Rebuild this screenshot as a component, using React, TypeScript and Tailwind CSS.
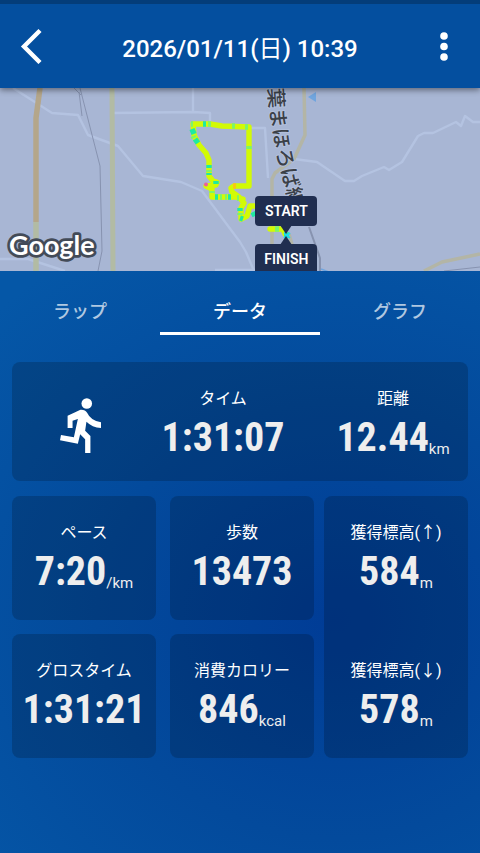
import React from 'react';

interface StatProps {
    label: string;
    value: string;
    unit?: string;
}

const tabs = ['ラップ', 'データ', 'グラフ'];

// Place name that runs down along the railway
const placeName = [
    { char: '葉', x: 276, y: 98, angle: 86 },
    { char: 'ま', x: 278, y: 118, angle: 84 },
    { char: 'ほ', x: 281, y: 138, angle: 82 },
    { char: 'ろ', x: 285, y: 158, angle: 79 },
    { char: 'ば', x: 290, y: 178, angle: 77 },
    { char: '線', x: 295, y: 197, angle: 75 },
];

const localRoads = [
    'M13 88L52 113L78 115L88 135L118 146L143 176L181 182L202 191L240 242L246 252L254 271',
    'M113 113L193 112L210 113V122',
    'M193 88V112',
    'M0 259H28L65 271',
    'M250 128H265L268 178',
    'M294 159L317 162L345 181H354L362 176L384 167L389 170L402 162L418 136L424 133H433L456 122L461 126L465 116L473 122H480',
    'M215 270H256',
];

const trackPath =
    'M285 234L283 229H270M254 206H250L247 216L241 219V208L244 203L239 197L232 192L231 188L234 186H249V127L222 126L210 124H193L194 135L199 145L206 153L209 160V176L213 181L217 182L216 185L206 186L212 189V197H235L243 199';

// Parts of the track that were run at another speed
const slowParts = [
    'M192 129L194 134', 'M195 139L198 143', 'M203 124H206', 'M209 165V168', 'M209 173V175', 'M216 181V184',
    'M215 197H218', 'M228 197H231', 'M240 208V211', 'M240 218L243 219', 'M253 212L255 216', 'M284 235H289',
];

const mixedParts = [
    'M191 124H193', 'M193 136L194 138', 'M208 124H211', 'M232 126H235', 'M245 127H248', 'M249 146V149',
    'M220 197H222', 'M225 197H227', 'M237 198H239', 'M240 213V215', 'M275 229H279', 'M212 191V193', 'M209 170V172',
];

function Stat({ label, value, unit }: StatProps) {
    return (
        <div className="flex flex-col items-center whitespace-nowrap">
            <dt className="text-base leading-[26px]">{label}</dt>
            <dd className="flex items-end text-[#eeeeee]">
                <span className="font-['Roboto_Condensed','Roboto',sans-serif] text-[40px] leading-[52px] font-bold">{value}</span>
                {unit && <span className="text-[15px] leading-[30px]">{unit}</span>}
            </dd>
        </div>
    );
}

function Header() {
    return (
        <header className="relative z-10 flex h-[88px] items-center justify-between border-t-4 border-[#043d7a] bg-[#044f9f] px-5 shadow-[0_2px_6px_rgba(0,0,0,0.45)]">
            <button type="button" aria-label="戻る" className="h-9 w-6">
                <svg viewBox="0 0 24 36" className="h-9 w-6" fill="none" stroke="#fff" strokeWidth="4.4">
                    <path d="M20 2.500L4 18.500L20 34.500" />
                </svg>
            </button>
            <h1 className="pt-1.5 text-2xl leading-9 font-medium">
                2026/01/11(<span className="font-normal">日</span>) 10:39
            </h1>
            <button type="button" aria-label="メニュー" className="h-9 w-6">
                <svg viewBox="0 0 24 36" className="h-9 w-6" fill="#fff">
                    <circle cx="8" cy="8" r="3.8" />
                    <circle cx="8" cy="18.5" r="3.8" />
                    <circle cx="8" cy="29" r="3.8" />
                </svg>
            </button>
        </header>
    );
}

function RouteMap() {
    return (
        <section className="relative overflow-hidden bg-[#a8b6d4]">
            <svg viewBox="0 88 480 183" className="block w-full" fill="none" strokeLinejoin="round">
                {localRoads.map((d) => (
                    <path key={d} d={d} stroke="#b4c3e1" strokeWidth="2.4" />
                ))}
                <g stroke="#8793b0" strokeWidth="1">
                    <path d="M74 88L81 95M80 88L100 166L102 251L98 271M79 92L82 116" />
                    <path d="M309 227L320 258V271" strokeWidth="2" />
                    <path d="M444 271L480 267" />
                </g>
                <path d="M40 88L36 118V222" stroke="#b4a68a" strokeWidth="5.5" />
                <path d="M36 222V271" stroke="#b2bba4" strokeWidth="5.5" />
                <path d="M112 88L113 271" stroke="#b2bba4" strokeWidth="5" />
                <g stroke="#b3b5a6" strokeWidth="3.5">
                    <path d="M304 88L305 135L294 159L275 173L272 179V271" />
                    <path d="M289 234L293 248" />
                    <path d="M424 271L442 262L480 254" />
                </g>
                <path d="M308 97L316 92V102Z" fill="#70a5de" />
                <path d="M321 269L329 272" stroke="#70a5de" strokeWidth="1.5" />

                <g className="font-['Noto_Sans_CJK_JP',sans-serif] text-[20px] font-medium" fill="#3b4048" stroke="#b3c0dc" strokeWidth="2" paintOrder="stroke" textAnchor="middle">
                    {placeName.map(({ char, x, y, angle }) => (
                        <text key={char} x={x} y={y + 7} transform={`rotate(${angle} ${x} ${y})`}>
                            {char}
                        </text>
                    ))}
                </g>

                <path d={trackPath} stroke="#d2fa05" strokeWidth="5.4" strokeLinecap="round" />
                <g strokeWidth="5.4">
                    <path d={mixedParts.join('')} stroke="#7cf56a" />
                    <path d={slowParts.join('')} stroke="#1eeaa2" />
                    <path d="M233 186H236" stroke="#fbc614" />
                </g>
                <circle cx="206" cy="184.500" r="2" fill="#ee5c9c" />
                <path d="M284 233L290 238M284 238L290 233" stroke="#20d8ee" strokeWidth="1.8" />

                <text x="9" y="255" className="font-['Lato',sans-serif] text-[27px] font-bold" fill="#fff" stroke="#434b58" strokeWidth="5.5" strokeLinejoin="round" paintOrder="stroke">
                    Google
                </text>
            </svg>
            <div className="absolute top-[59%] left-[53%] flex flex-col items-center gap-[18px] pl-px text-sm leading-[31px] font-semibold">
                <div className="relative h-[30px] w-[62px] rounded-[4px] bg-[#202e50] text-center">
                    START
                    <svg viewBox="0 0 12 9" className="absolute top-full left-1/2 h-2 w-3 -translate-x-1/2" fill="#202e50">
                        <path d="M0 0H12L6 9Z" />
                    </svg>
                </div>
                <div className="relative h-[30px] w-[62px] rounded-[4px] bg-[#202e50] text-center">
                    FINISH
                    <svg viewBox="0 0 12 9" className="absolute bottom-full left-1/2 h-2 w-3 -translate-x-1/2" fill="#202e50">
                        <path d="M0 9H12L6 0Z" />
                    </svg>
                </div>
            </div>
        </section>
    );
}

function RunnerIcon() {
    return (
        <svg viewBox="0 0 124 168" className="h-14 w-[41px]" fill="#fff" role="img" aria-label="ランニング">
            <circle cx="81" cy="16" r="16" />
            <path d="M62 35Q76 34 82 44Q93 68 124 73V90Q97 88 80 71L76 98L92 114V166H76V124L61 109L54 138L0 127L3 111L42 118L54 63L38 68V90H23V53Z" />
        </svg>
    );
}

export default function App() {
    return (
        <div className="flex min-h-screen flex-col bg-[#044f9f] font-['Roboto','Noto_Sans_CJK_JP',sans-serif] text-white">
            <Header />
            <RouteMap />
            <main className="flex-1 bg-[radial-gradient(ellipse_100%_75%_at_70%_60%,#003c96_0%,#034a9c_50%,#0557a7_100%)] pb-6">
                <div role="tablist" className="grid grid-cols-3">
                    {tabs.map((tab) => (
                        <button
                            key={tab}
                            type="button"
                            role="tab"
                            aria-selected={tab === 'データ'}
                            className="h-16 border-b-[3px] border-transparent pt-5 text-lg leading-7 font-medium text-white/70 aria-selected:border-white aria-selected:text-white"
                        >
                            {tab}
                        </button>
                    ))}
                </div>

                <div className="mt-[27px] flex flex-col gap-[15px] px-3">
                    <dl className="grid h-[119px] grid-cols-[136fr_150fr_170fr] rounded-lg bg-black/18 pt-6">
                        <div className="flex justify-center pt-3">
                            <RunnerIcon />
                        </div>
                        <Stat label="タイム" value="1:31:07" />
                        <div className="pl-5">
                            <Stat label="距離" value="12.44" unit="km" />
                        </div>
                    </dl>

                    <div className="grid grid-cols-[302fr_144fr] gap-[10px]">
                        <dl className="grid grid-cols-2 gap-[14px]">
                            <div className="h-[124px] rounded-lg bg-black/18 pt-6">
                                <Stat label="ペース" value="7:20" unit="/km" />
                            </div>
                            <div className="h-[124px] rounded-lg bg-black/18 pt-6">
                                <Stat label="歩数" value="13473" />
                            </div>
                            <div className="h-[124px] rounded-lg bg-black/18 pt-6">
                                <Stat label="グロスタイム" value="1:31:21" />
                            </div>
                            <div className="h-[124px] rounded-lg bg-black/18 pt-6">
                                <Stat label="消費カロリー" value="846" unit="kcal" />
                            </div>
                        </dl>
                        <dl className="grid grid-rows-[124px_100px] content-start gap-[14px] rounded-lg bg-black/18 pt-6">
                            <Stat label="獲得標高(↑)" value="584" unit="m" />
                            <Stat label="獲得標高(↓)" value="578" unit="m" />
                        </dl>
                    </div>
                </div>
            </main>
        </div>
    );
}
